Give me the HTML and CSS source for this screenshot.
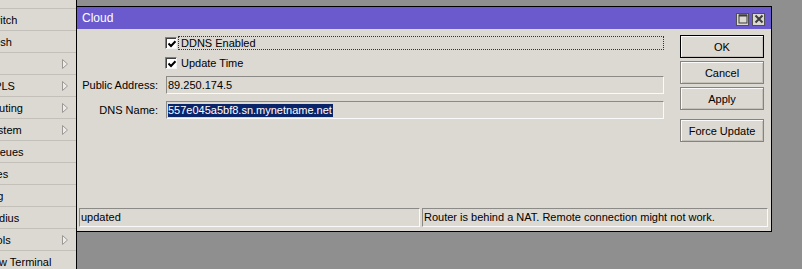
FILE: index.html
```html
<!DOCTYPE html>
<html>
<head>
<meta charset="utf-8">
<title>Cloud</title>
<link rel="stylesheet" href="styles.css">
</head>
<body>
<div class="desktop">
  <nav class="sidebar">
    <div class="sb-top"></div>
    <div class="sb-item"><span class="sb-text">Switch</span></div>
    <div class="sb-item"><span class="sb-text">Mesh</span></div>
    <div class="sb-item"><span class="sb-text">IP</span><svg class="arrow" width="6" height="10" viewBox="0 0 6 10"><polygon points="0.5,0.5 5.5,5 0.5,9.5" fill="#eeece8" stroke="#9a9894"/></svg></div>
    <div class="sb-item"><span class="sb-text">MPLS</span><svg class="arrow" width="6" height="10" viewBox="0 0 6 10"><polygon points="0.5,0.5 5.5,5 0.5,9.5" fill="#eeece8" stroke="#9a9894"/></svg></div>
    <div class="sb-item"><span class="sb-text">Routing</span><svg class="arrow" width="6" height="10" viewBox="0 0 6 10"><polygon points="0.5,0.5 5.5,5 0.5,9.5" fill="#eeece8" stroke="#9a9894"/></svg></div>
    <div class="sb-item"><span class="sb-text">System</span><svg class="arrow" width="6" height="10" viewBox="0 0 6 10"><polygon points="0.5,0.5 5.5,5 0.5,9.5" fill="#eeece8" stroke="#9a9894"/></svg></div>
    <div class="sb-item"><span class="sb-text">Queues</span></div>
    <div class="sb-item"><span class="sb-text">Files</span></div>
    <div class="sb-item"><span class="sb-text">Log</span></div>
    <div class="sb-item"><span class="sb-text">Radius</span></div>
    <div class="sb-item"><span class="sb-text">Tools</span><svg class="arrow" width="6" height="10" viewBox="0 0 6 10"><polygon points="0.5,0.5 5.5,5 0.5,9.5" fill="#eeece8" stroke="#9a9894"/></svg></div>
    <div class="sb-item"><span class="sb-text">New Terminal</span></div>
  </nav>
  <main class="mdi">
    <section class="window">
      <header class="titlebar">
        <span class="title">Cloud</span>
        <div class="tb-btns">
          <span class="tb-btn"><svg width="10" height="10" viewBox="0 0 10 10"><rect x="1" y="1" width="8" height="8" fill="none" stroke="#3c3c3c" stroke-width="1"/><rect x="1" y="0.5" width="8" height="2" fill="#3c3c3c"/></svg></span>
          <span class="tb-btn"><svg width="10" height="10" viewBox="0 0 10 10"><path d="M1.5 1.5 L8.5 8.5 M8.5 1.5 L1.5 8.5" stroke="#3c3c3c" stroke-width="2"/></svg></span>
        </div>
      </header>
      <div class="win-body">
        <div class="main">
          <div class="form">
            <div class="cb-row r1">
              <span class="checkbox"><svg width="8" height="8" viewBox="0 0 8 8"><path d="M0.5 3.5 L3 6 L7.5 1.2" fill="none" stroke="#000" stroke-width="2"/></svg></span>
              <span class="cb-label focused">DDNS Enabled</span>
            </div>
            <div class="cb-row r2">
              <span class="checkbox"><svg width="8" height="8" viewBox="0 0 8 8"><path d="M0.5 3.5 L3 6 L7.5 1.2" fill="none" stroke="#000" stroke-width="2"/></svg></span>
              <span class="cb-label">Update Time</span>
            </div>
            <label class="f-label r3">Public Address:</label>
            <div class="field r3">89.250.174.5</div>
            <label class="f-label r4">DNS Name:</label>
            <div class="field r4"><span class="selected">557e045a5bf8.sn.mynetname.net</span></div>
          </div>
          <div class="actions">
            <button class="btn default">OK</button>
            <button class="btn">Cancel</button>
            <button class="btn">Apply</button>
            <button class="btn spaced">Force Update</button>
          </div>
        </div>
        <div class="statusbar">
          <div class="status s1">updated</div>
          <div class="status s2">Router is behind a NAT. Remote connection might not work.</div>
        </div>
      </div>
    </section>
  </main>
</div>
</body>
</html>
```

FILE: styles.css
```css
html, body {
  margin: 0;
  padding: 0;
}
body {
  background: #8f8f8f;
  font-family: "Liberation Sans", Arial, sans-serif;
  font-size: 11px;
  color: #000;
  overflow: hidden;
}
.desktop {
  display: flex;
  height: 269px;
}
.sidebar {
  flex: none;
  width: 76px;
  background: #dcd9d3;
  border-right: 1px solid #000;
  overflow: hidden;
}
.sb-top {
  height: 8px;
  border-bottom: 1px solid #c3c0ba;
}
.sb-item {
  height: 21px;
  border-bottom: 1px solid #c3c0ba;
  display: flex;
  align-items: center;
}
.sb-text {
  flex: none;
  margin-left: -15px;
  white-space: nowrap;
}
.arrow {
  flex: none;
  margin-left: auto;
  margin-right: 8px;
}
.mdi {
  flex: 1;
  padding-top: 6px;
}
.window {
  box-sizing: border-box;
  width: 696px;
  height: 226px;
  margin-left: -1px;
  border: 1px solid #000;
  background: #dcd8d2;
  display: flex;
  flex-direction: column;
}
.titlebar {
  flex: none;
  height: 22px;
  background: #6a5acd;
  color: #fff;
  display: flex;
  align-items: center;
  padding-left: 5px;
  padding-right: 6px;
}
.title {
  font-size: 12px;
}
.tb-btns {
  margin-left: auto;
  display: flex;
  gap: 3px;
  margin-top: 2px;
}
.tb-btn {
  box-sizing: border-box;
  width: 13px;
  height: 13px;
  background: #dcd8d2;
  border: 1px solid #505050;
  display: flex;
  align-items: center;
  justify-content: center;
}
.win-body {
  flex: 1;
  display: flex;
  flex-direction: column;
}
.main {
  display: flex;
  padding: 6px 7px 0 0;
}
.form {
  flex: 1;
  padding-top: 1px;
  display: grid;
  grid-template-columns: 81px 1fr;
  grid-template-rows: 14px 20px 24px 25px;
  column-gap: 8px;
}
.cb-row {
  grid-column: 2;
  display: flex;
  align-items: center;
  align-self: end;
  height: 14px;
}
.r1 { grid-row: 1; }
.r2 { grid-row: 2; }
.r3 { grid-row: 3; }
.r4 { grid-row: 4; }
.checkbox {
  box-sizing: border-box;
  flex: none;
  width: 12px;
  height: 12px;
  margin-left: -1px;
  background: #fff;
  border: 1px solid;
  border-color: #808080 #f4f4f4 #f4f4f4 #808080;
  box-shadow: inset 1px 1px 0 #404040;
  display: flex;
  align-items: center;
  justify-content: center;
}
.checkbox svg {
  margin: 1px 0 0 1px;
}
.cb-label {
  box-sizing: border-box;
  flex: 1;
  height: 14px;
  margin-left: 1px;
  padding-left: 2px;
  line-height: 12px;
  border: 1px dotted transparent;
}
.cb-label.focused {
  border-color: #333;
}
.f-label {
  grid-column: 1;
  align-self: end;
  text-align: right;
  line-height: 18px;
  white-space: nowrap;
}
.field {
  grid-column: 2;
  align-self: end;
  box-sizing: border-box;
  height: 18px;
  border: 1px solid;
  border-color: #8c8a86 #fafafa #fafafa #8c8a86;
  padding-left: 1px;
  line-height: 16px;
  white-space: nowrap;
}
.selected {
  background: #0a246a;
  color: #fff;
  padding: 0 1px 1px 0;
}
.actions {
  flex: none;
  width: 84px;
  margin-left: 16px;
  display: flex;
  flex-direction: column;
  gap: 3px;
}
.btn {
  box-sizing: border-box;
  height: 23px;
  padding: 0;
  font-family: inherit;
  font-size: 11px;
  color: #000;
  background: #dcd8d2;
  border: 1px solid #858380;
  box-shadow: inset 1px 1px 0 #fafafa, inset -1px -1px 0 #c4c1bb;
}
.btn.default {
  border-color: #000;
}
.btn.spaced {
  margin-top: 6px;
}
.statusbar {
  margin-top: auto;
  display: flex;
  gap: 2px;
  padding: 0 3px 4px 2px;
}
.status {
  box-sizing: border-box;
  height: 19px;
  border: 1px solid;
  border-color: #8c8a86 #fafafa #fafafa #8c8a86;
  padding-left: 1px;
  line-height: 17px;
  white-space: nowrap;
  overflow: hidden;
}
.s1 {
  width: 341px;
  flex: none;
}
.s2 {
  flex: 1;
}
```
